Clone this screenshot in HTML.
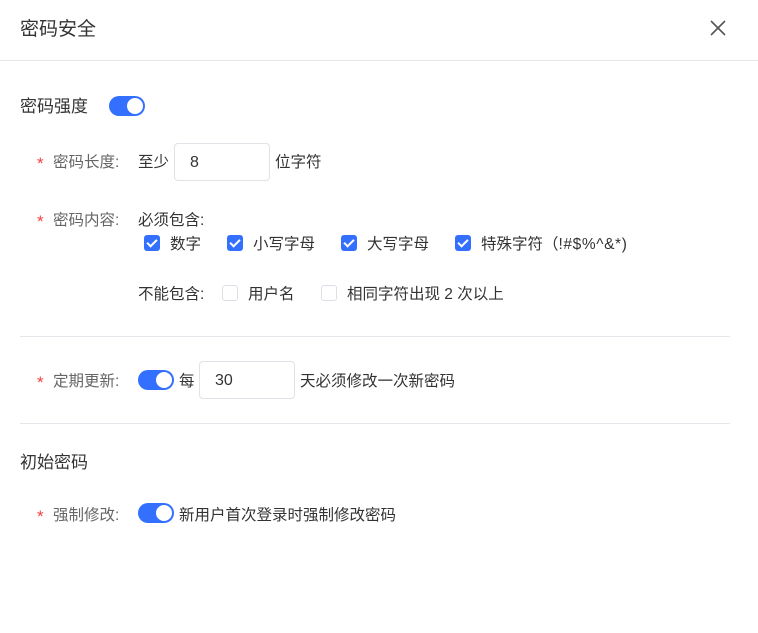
<!DOCTYPE html>
<html><head><meta charset="utf-8"><style>
*{margin:0;padding:0;box-sizing:border-box}
body{width:758px;height:633px;background:#fff;position:relative;overflow:hidden;font-family:"Liberation Sans","Noto Sans CJK SC",sans-serif;color:#333;font-size:15.5px}
.a{position:absolute;white-space:nowrap;line-height:20px;margin-top:2px}
.hr{position:absolute;height:1px;background:#e5e6eb}
.lbl{color:#666}
.star{color:#f53f3f;position:absolute;font-size:17px}
.tg{position:absolute;width:36px;height:20px;border-radius:10px;background:#3370ff}
.tg::after{content:"";position:absolute;right:2px;top:2px;width:16px;height:16px;border-radius:50%;background:#fff}
.inp{position:absolute;height:38px;border:1px solid #e0e2e8;border-radius:4px;padding-left:15px;line-height:38px;font-size:16px}
.cb{position:absolute;width:16px;height:16px;border-radius:3px;background:#3370ff}
.cb::after{content:"";position:absolute;left:5px;top:2px;width:4px;height:8px;border:solid #fff;border-width:0 2px 2px 0;transform:rotate(45deg)}
.ce{position:absolute;width:16px;height:16px;border-radius:3px;border:1px solid #dcdfe6;background:#fff}
.sp{letter-spacing:0.6px}
</style></head><body>
<div class="a" style="left:20px;top:17px;font-size:19px;line-height:22px">密码安全</div>
<svg style="position:absolute;left:709px;top:19px" width="18" height="18" viewBox="0 0 18 18"><path d="M2 2L16 16M16 2L2 16" stroke="#555" stroke-width="1.6" fill="none"/></svg>
<div class="hr" style="left:0;top:60px;width:758px"></div>

<div class="a" style="left:20px;top:95px;font-size:17px">密码强度</div>
<div class="tg" style="left:109px;top:96px"></div>

<span class="star a" style="left:37px;top:152px">*</span>
<div class="a lbl" style="left:53px;top:151px">密码长度:</div>
<div class="a" style="left:138px;top:151px">至少</div>
<div class="inp" style="left:174px;top:143px;width:96px">8</div>
<div class="a" style="left:275px;top:151px">位字符</div>

<span class="star a" style="left:37px;top:210px">*</span>
<div class="a lbl" style="left:53px;top:209px">密码内容:</div>
<div class="a" style="left:138px;top:209px">必须包含:</div>
<div class="cb" style="left:144px;top:235px"></div><div class="a" style="left:170px;top:233px">数字</div>
<div class="cb" style="left:227px;top:235px"></div><div class="a" style="left:253px;top:233px">小写字母</div>
<div class="cb" style="left:341px;top:235px"></div><div class="a" style="left:367px;top:233px">大写字母</div>
<div class="cb" style="left:455px;top:235px"></div><div class="a" style="left:481px;top:233px">特殊字符（<span class="sp">!#$%^&amp;*</span>)</div>
<div class="a" style="left:138px;top:283px">不能包含:</div>
<div class="ce" style="left:222px;top:285px"></div><div class="a" style="left:248px;top:283px">用户名</div>
<div class="ce" style="left:321px;top:285px"></div><div class="a" style="left:347px;top:283px">相同字符出现 2 次以上</div>

<div class="hr" style="left:20px;top:336px;width:710px"></div>

<span class="star a" style="left:37px;top:371px">*</span>
<div class="a lbl" style="left:53px;top:370px">定期更新:</div>
<div class="tg" style="left:138px;top:370px"></div>
<div class="a" style="left:179px;top:370px">每</div>
<div class="inp" style="left:199px;top:361px;width:96px">30</div>
<div class="a" style="left:300px;top:370px">天必须修改一次新密码</div>

<div class="hr" style="left:20px;top:423px;width:710px"></div>

<div class="a" style="left:20px;top:451px;font-size:17px">初始密码</div>

<span class="star a" style="left:37px;top:505px">*</span>
<div class="a lbl" style="left:53px;top:504px">强制修改:</div>
<div class="tg" style="left:138px;top:503px"></div>
<div class="a" style="left:179px;top:504px">新用户首次登录时强制修改密码</div>
</body></html>
